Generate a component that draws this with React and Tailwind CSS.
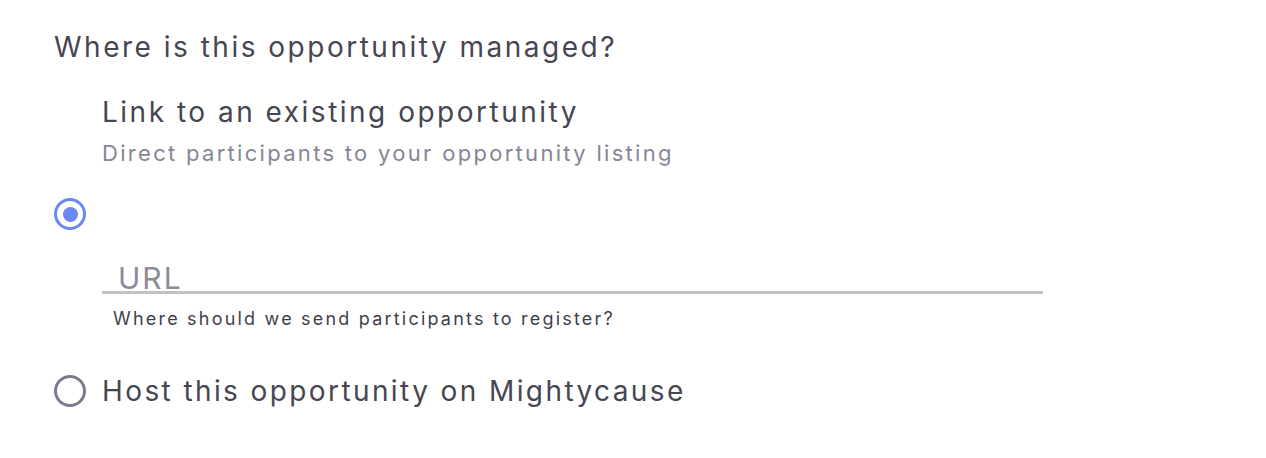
import { useState } from "react";

function Radio({ checked, onClick }) {
  return (
    <button
      type="button"
      onClick={onClick}
      className={`flex h-8 w-8 shrink-0 items-center justify-center rounded-full border-[3px] ${
        checked ? "border-[#6788f6]" : "border-[#7b7b8b]"
      }`}
    >
      {checked && <span className="h-[15px] w-[15px] rounded-full bg-[#6788f6]" />}
    </button>
  );
}

export default function App() {
  const [choice, setChoice] = useState("link");

  return (
    <div className="min-h-screen bg-white pl-[54px] pt-[29px] font-['Inter',sans-serif] text-[#464652]">
      <h2 className="text-[28px] leading-[36px] tracking-[2.5px]">Where is this opportunity managed?</h2>

      <div className="mt-[29px] flex items-center gap-4">
        <Radio checked={choice === "link"} onClick={() => setChoice("link")} />
        <div className="pb-[3px]">
          <p className="text-[28px] leading-[36px] tracking-[2.5px]">Link to an existing opportunity</p>
          <p className="mt-[9px] text-[22px] leading-[28px] tracking-[2.3px] text-[#868696]">
            Direct participants to your opportunity listing
          </p>
          <input
            type="text"
            placeholder="URL"
            className="mt-[98px] box-border block h-[29px] w-[941px] border-b-[3px] border-[#c2c2c2] bg-transparent pl-4 text-[30px] leading-[26px] tracking-[2px] text-[#464652] outline-none placeholder:text-[#8b8b9a]"
          />
          <p className="mt-[13px] pl-[11px] text-[18px] leading-[24px] tracking-[2.2px] text-[#3f3f4a]">
            Where should we send participants to register?
          </p>
        </div>
      </div>

      <div className="mt-[39px] flex items-center gap-4">
        <Radio checked={choice === "host"} onClick={() => setChoice("host")} />
        <p className="text-[28px] leading-[36px] tracking-[2.4px]">Host this opportunity on Mightycause</p>
      </div>
    </div>
  );
}
